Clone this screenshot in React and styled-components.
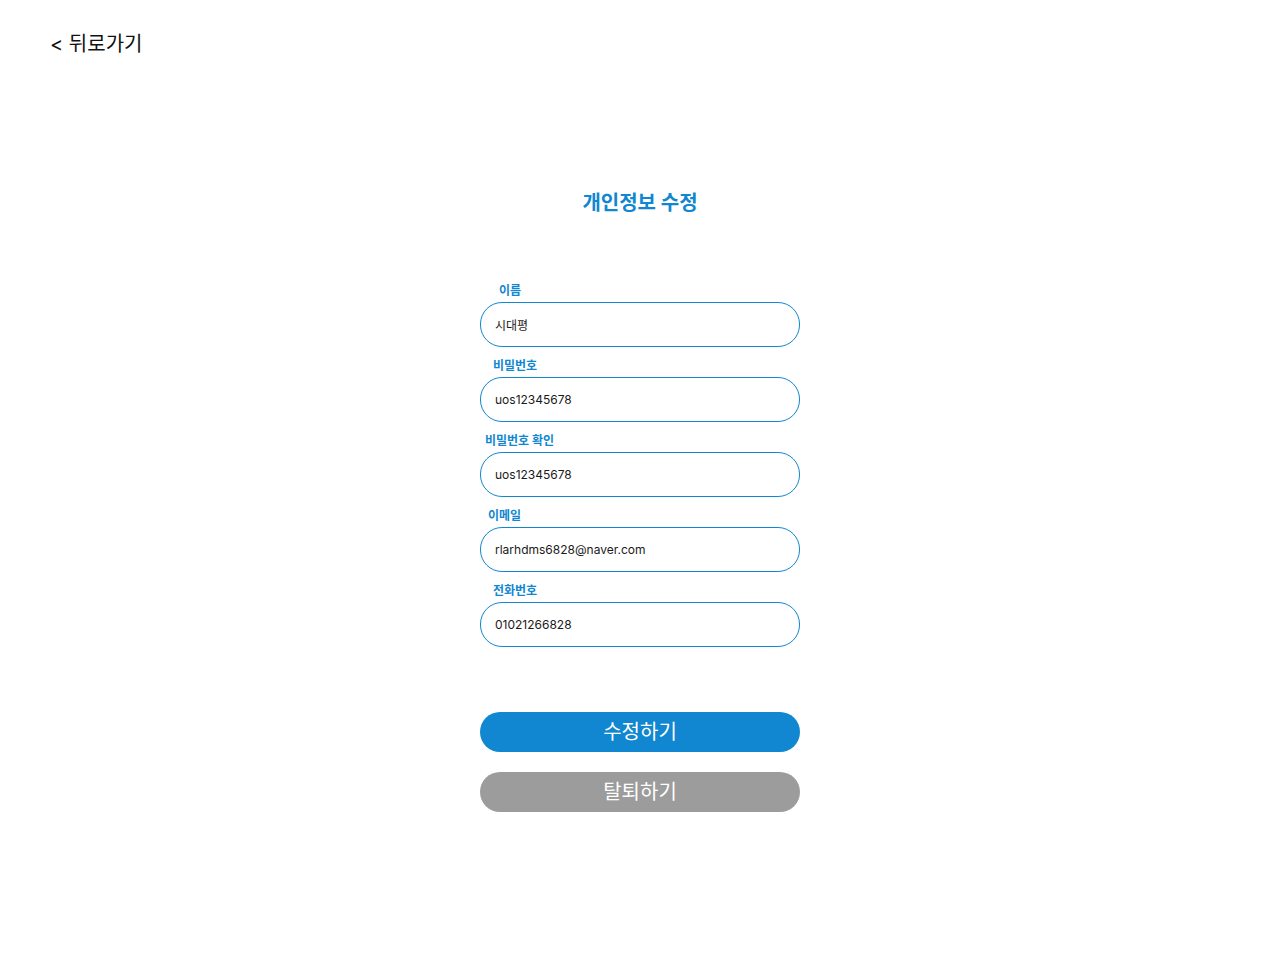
import React from 'react';
import styled, { createGlobalStyle } from 'styled-components';

const GlobalStyle = createGlobalStyle`
  body {
    margin: 0;
    background: #ffffff;
    font-family: Inter, "Noto Sans CJK KR", sans-serif;
  }
`;

const Page = styled.div`
  display: flex;
  flex-direction: column;
  padding: 32px 50px 0;
`;

const BackLink = styled.a`
  font-size: 20px;
  line-height: 24px;
  color: #111111;
  text-decoration: none;
  cursor: pointer;
  align-self: flex-start;
`;

const Main = styled.div`
  display: flex;
  flex-direction: column;
  align-items: center;
  margin-top: 135px;
`;

const Title = styled.h1`
  margin: 0;
  font-size: 20px;
  line-height: 24px;
  font-weight: 700;
  color: #1087d0;
`;

const Form = styled.form`
  width: 320px;
  margin-top: 68px;
  display: flex;
  flex-direction: column;
`;

const Field = styled.div`
  display: flex;
  flex-direction: column;
  margin-bottom: 11px;
`;

const Label = styled.label`
  font-size: 12px;
  line-height: 16px;
  font-weight: 700;
  color: #1087d0;
  padding-left: ${(p) => p.$indent}px;
  margin-bottom: 3px;
`;

const Input = styled.input`
  box-sizing: border-box;
  width: 100%;
  height: 45px;
  border: 1px solid #1087d0;
  border-radius: 22px;
  padding: 0 14px;
  font-family: Inter, "Noto Sans CJK KR", sans-serif;
  font-size: 12px;
  color: #1a1a1a;
  outline: none;
`;

const Buttons = styled.div`
  display: flex;
  flex-direction: column;
  gap: 20px;
  margin-top: 54px;
`;

const Button = styled.button`
  height: 40px;
  border: none;
  border-radius: 20px;
  padding: 0 0 3px;
  background: ${(p) => (p.$muted ? '#9c9c9c' : '#1087d0')};
  color: #ffffff;
  font-family: Inter, "Noto Sans CJK KR", sans-serif;
  font-size: 20px;
  cursor: pointer;
`;

const fields = [
  { label: '이름', value: '시대평', indent: 19 },
  { label: '비밀번호', value: 'uos12345678', indent: 13 },
  { label: '비밀번호 확인', value: 'uos12345678', indent: 5 },
  { label: '이메일', value: 'rlarhdms6828@naver.com', indent: 8 },
  { label: '전화번호', value: '01021266828', indent: 13 },
];

export default function App() {
  return (
    <Page>
      <GlobalStyle />
      <BackLink>&lt; 뒤로가기</BackLink>
      <Main>
        <Title>개인정보 수정</Title>
        <Form onSubmit={(e) => e.preventDefault()}>
          {fields.map((f) => (
            <Field key={f.label}>
              <Label $indent={f.indent}>{f.label}</Label>
              <Input defaultValue={f.value} />
            </Field>
          ))}
          <Buttons>
            <Button type="submit">수정하기</Button>
            <Button type="button" $muted>탈퇴하기</Button>
          </Buttons>
        </Form>
      </Main>
    </Page>
  );
}
